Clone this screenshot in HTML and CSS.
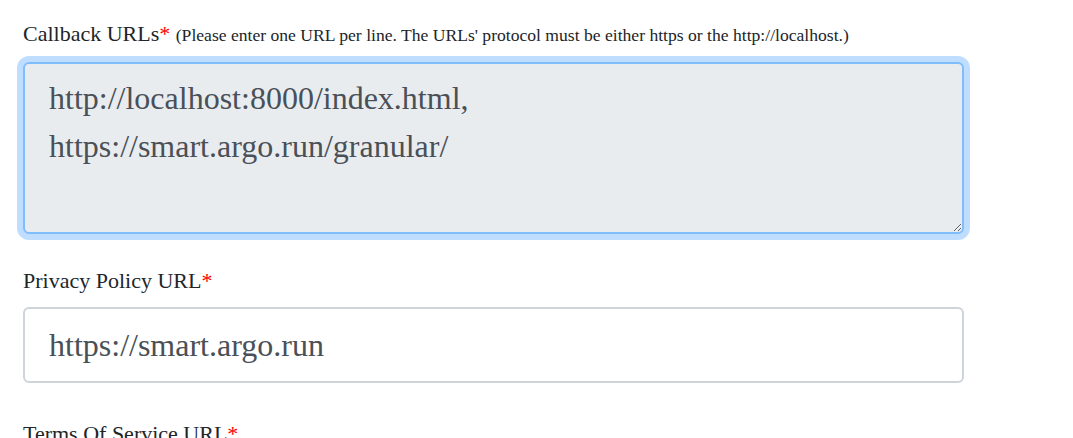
FILE: index.html
```html
<!DOCTYPE html>
<html>
<head>
<meta charset="utf-8">
<link rel="stylesheet" href="styles.css">
</head>
<body>
<form class="form">
  <div class="group group-area">
    <label class="label" for="cb">Callback URLs<span class="req">*</span> <small class="hint">(Please enter one URL per line. The URLs' protocol must be either https or the http://localhost.)</small></label>
    <textarea id="cb" class="control area focused">http://localhost:8000/index.html,
https://smart.argo.run/granular/</textarea>
  </div>
  <div class="group">
    <label class="label" for="pp">Privacy Policy URL<span class="req">*</span></label>
    <input id="pp" class="control" type="text" value="https://smart.argo.run">
  </div>
  <div class="group">
    <label class="label" for="tos">Terms Of Service URL<span class="req">*</span></label>
  </div>
</form>
</body>
</html>
```
FILE: styles.css
```css
html, body {
  margin: 0;
  padding: 0;
  background: #fff;
  overflow: hidden;
}
body {
  font-family: "Liberation Serif", "Times New Roman", serif;
  color: #212529;
}
.form {
  padding: 17px 0 0 23px;
  width: 941px;
}
.group {
  margin-bottom: 34px;
}
.group-area {
  margin-bottom: 30px;
}
.label {
  display: block;
  font-size: 22px;
  line-height: 33px;
  margin-bottom: 10px;
}
.req {
  color: #ff0000;
}
.hint {
  font-size: 17.6px;
}
.control {
  display: block;
  box-sizing: border-box;
  width: 941px;
  font-family: "Liberation Serif", "Times New Roman", serif;
  font-size: 32px;
  line-height: 48px;
  color: #495057;
  background: #fff;
  border: 2px solid #ced4da;
  border-radius: 6px;
  padding: 13px 24px;
  margin: 0;
  outline: none;
}
input.control {
  height: 76px;
}
.area {
  height: 172px;
  padding-top: 10px;
  resize: vertical;
  background: #e9ecef;
}
.focused {
  border-color: #80bdff;
  box-shadow: 0 0 0 6px rgba(0, 123, 255, 0.25);
}
```
